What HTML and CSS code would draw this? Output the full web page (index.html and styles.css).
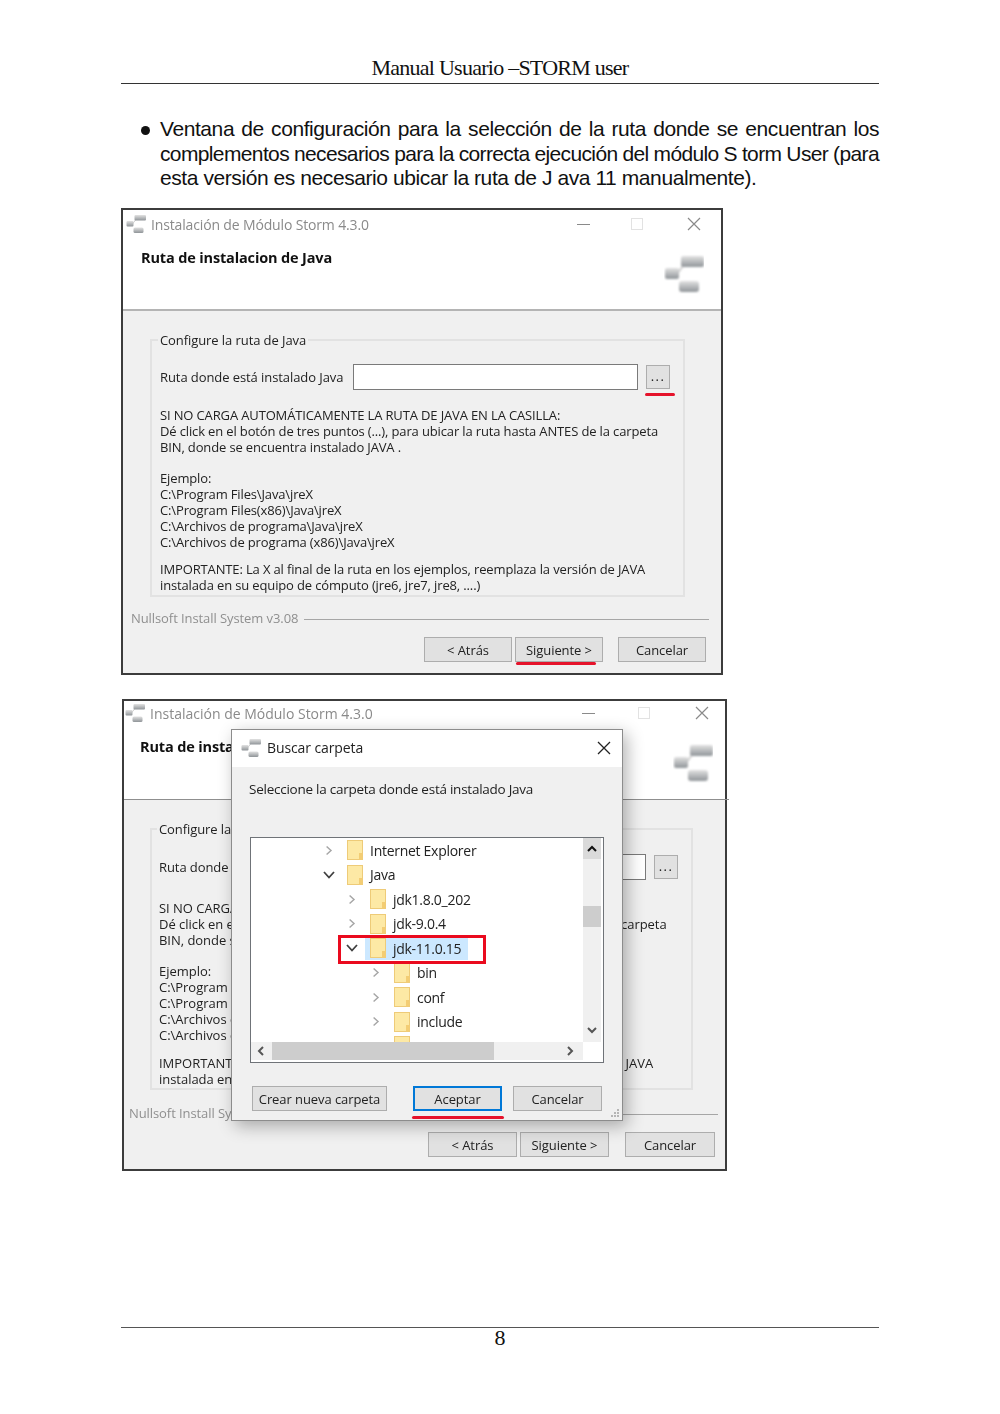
FILE: index.html
```html
<!DOCTYPE html>
<html lang="es">
<head>
  <meta charset="UTF-8" />
  <title>Manual Usuario - STORM user</title>
  <link rel="stylesheet" href="styles.css">
</head>
<body>
  <svg class="defs" width="0" height="0">
    <defs>
      <linearGradient id="blockGrad" x1="0" y1="0" x2="0" y2="1">
        <stop offset="0" stop-color="#e2e2e2" />
        <stop offset="1" stop-color="#8f9498" />
      </linearGradient>
      <filter id="soft"><feGaussianBlur stdDeviation="1" /></filter>
      <symbol id="logo" viewBox="0 0 40 40">
        <g filter="url(#soft)">
          <path d="M13 20 L19 12" stroke="#d0d0d0" stroke-width="2" fill="none" />
          <rect x="17" y="2" width="23" height="11" rx="2" fill="url(#blockGrad)" />
          <rect x="1" y="14" width="14" height="11" rx="2" fill="url(#blockGrad)" />
          <rect x="15" y="27" width="20" height="11" rx="3" fill="url(#blockGrad)" />
        </g>
      </symbol>
      <symbol id="folder" viewBox="0 0 16 20">
        <rect x="0.5" y="0.5" width="15" height="19" fill="#fde9a5" stroke="#eecb78" />
        <rect x="12" y="13" width="3.5" height="6.5" fill="#f3cd74" />
      </symbol>
      <symbol id="chevRight" viewBox="0 0 10 12"><path d="M2 1 L7.5 6 L2 11" fill="none" stroke="#a6a6a6" stroke-width="1.8" /></symbol>
      <symbol id="chevDown" viewBox="0 0 12 10"><path d="M1 2 L6 7.5 L11 2" fill="none" stroke="#404040" stroke-width="1.8" /></symbol>
    </defs>
  </svg>

  <div class="page">
    <header class="doc-header">Manual Usuario –STORM user</header>

    <div class="bullet">
      <span class="dot"></span>
      <p class="bullet-text">
        <span class="line">Ventana de configuración para la selección de la ruta donde se encuentran los</span>
        <span class="line tight">complementos necesarios para la correcta ejecución del módulo S torm User (para</span>
        <span class="line last">esta versión es necesario ubicar la ruta de J ava 11 manualmente).</span>
      </p>
    </div>

    <!-- first capture -->
    <div class="window win-a">
      <div class="head">
        <div class="titlebar">
          <svg class="title-logo"><use href="#logo" /></svg>
          <span class="title-text">Instalación de Módulo Storm 4.3.0</span>
          <span class="ctl-min"></span>
          <span class="ctl-max"></span>
          <svg class="ctl-close" viewBox="0 0 14 14"><path d="M1 1 L13 13 M13 1 L1 13" stroke="#8a8a8a" stroke-width="1.2" /></svg>
        </div>
        <div class="banner">
          <h2 class="banner-title">Ruta de instalacion de Java</h2>
          <svg class="banner-logo"><use href="#logo" /></svg>
        </div>
      </div>
      <div class="head-line"></div>
      <fieldset class="group">
        <legend>Configure la ruta de Java</legend>
        <div class="path-row">
          <span class="path-label">Ruta donde está instalado Java</span>
          <span class="path-input"></span>
          <span class="btn btn-dots">...</span>
        </div>
        <p class="note first">SI NO CARGA AUTOMÁTICAMENTE LA RUTA DE JAVA EN LA CASILLA:<br>Dé click en el botón de tres puntos (...), para ubicar la ruta hasta ANTES de la carpeta<br>BIN, donde se encuentra instalado JAVA .</p>
        <p class="note">Ejemplo:<br>C:\Program Files\Java\jreX<br>C:\Program Files(x86)\Java\jreX<br>C:\Archivos de programa\Java\jreX<br>C:\Archivos de programa (x86)\Java\jreX</p>
        <p class="note last-note">IMPORTANTE: La X al final de la ruta en los ejemplos, reemplaza la versión de JAVA<br>instalada en su equipo de cómputo (jre6, jre7, jre8, ....)</p>
      </fieldset>
      <div class="brand"><span>Nullsoft Install System v3.08</span><i></i></div>
      <div class="actions">
        <span class="btn">&lt; Atrás</span>
        <span class="btn">Siguiente &gt;</span>
        <span class="btn btn-cancel">Cancelar</span>
      </div>
      <span class="mark mark-dots"></span>
      <span class="mark mark-next"></span>
    </div>

    <!-- second capture, folder dialog open -->
    <div class="window win-b">
      <div class="head">
        <div class="titlebar">
          <svg class="title-logo"><use href="#logo" /></svg>
          <span class="title-text">Instalación de Módulo Storm 4.3.0</span>
          <span class="ctl-min"></span>
          <span class="ctl-max"></span>
          <svg class="ctl-close" viewBox="0 0 14 14"><path d="M1 1 L13 13 M13 1 L1 13" stroke="#8a8a8a" stroke-width="1.2" /></svg>
        </div>
        <div class="banner">
          <h2 class="banner-title">Ruta de instalacion de Java</h2>
          <svg class="banner-logo"><use href="#logo" /></svg>
        </div>
      </div>
      <div class="head-line"></div>
      <fieldset class="group">
        <legend>Configure la ruta de Java</legend>
        <div class="path-row">
          <span class="path-label">Ruta donde está instalado Java</span>
          <span class="path-input"></span>
          <span class="btn btn-dots">...</span>
        </div>
        <p class="note first">SI NO CARGA AUTOMÁTICAMENTE LA RUTA DE JAVA EN LA CASILLA:<br>Dé click en el botón de tres puntos (...), para ubicar la ruta hasta ANTES de la carpeta<br>BIN, donde se encuentra instalado JAVA .</p>
        <p class="note">Ejemplo:<br>C:\Program Files\Java\jreX<br>C:\Program Files(x86)\Java\jreX<br>C:\Archivos de programa\Java\jreX<br>C:\Archivos de programa (x86)\Java\jreX</p>
        <p class="note last-note">IMPORTANTE: La X al final de la ruta en los ejemplos, reemplaza la versión de JAVA<br>instalada en su equipo de cómputo (jre6, jre7, jre8, ....)</p>
      </fieldset>
      <div class="brand"><span>Nullsoft Install System v3.08</span><i></i></div>
      <div class="actions">
        <span class="btn">&lt; Atrás</span>
        <span class="btn">Siguiente &gt;</span>
        <span class="btn btn-cancel">Cancelar</span>
      </div>

      <div class="dialog">
        <div class="dialog-title">
          <svg class="title-logo"><use href="#logo" /></svg>
          <span>Buscar carpeta</span>
          <svg class="dialog-close" viewBox="0 0 14 14"><path d="M1 1 L13 13 M13 1 L1 13" stroke="#222" stroke-width="1.3" /></svg>
        </div>
        <div class="dialog-body">
          <p class="dialog-prompt">Seleccione la carpeta donde está instalado Java</p>
          <div class="tree">
            <div class="tree-rows">
              <div class="row lvl1"><svg class="chev"><use href="#chevRight" /></svg><svg class="folder"><use href="#folder" /></svg><span>Internet Explorer</span></div>
              <div class="row lvl1"><svg class="chev open"><use href="#chevDown" /></svg><svg class="folder"><use href="#folder" /></svg><span>Java</span></div>
              <div class="row lvl2"><svg class="chev"><use href="#chevRight" /></svg><svg class="folder"><use href="#folder" /></svg><span>jdk1.8.0_202</span></div>
              <div class="row lvl2"><svg class="chev"><use href="#chevRight" /></svg><svg class="folder"><use href="#folder" /></svg><span>jdk-9.0.4</span></div>
              <div class="row lvl2 selected"><svg class="chev open"><use href="#chevDown" /></svg><div class="sel-bg"><svg class="folder"><use href="#folder" /></svg><span>jdk-11.0.15</span></div></div>
              <div class="row lvl3"><svg class="chev"><use href="#chevRight" /></svg><svg class="folder"><use href="#folder" /></svg><span>bin</span></div>
              <div class="row lvl3"><svg class="chev"><use href="#chevRight" /></svg><svg class="folder"><use href="#folder" /></svg><span>conf</span></div>
              <div class="row lvl3"><svg class="chev"><use href="#chevRight" /></svg><svg class="folder"><use href="#folder" /></svg><span>include</span></div>
              <div class="row lvl3"><span class="chev"></span><svg class="folder"><use href="#folder" /></svg></div>
            </div>
            <div class="vscroll">
              <span class="scroll-up"><svg viewBox="0 0 10 8"><path d="M1 6 L5 2 L9 6" fill="none" stroke="#111" stroke-width="2" /></svg></span>
              <span class="scroll-thumb"></span>
              <svg class="scroll-down" viewBox="0 0 10 8"><path d="M1 2 L5 6 L9 2" fill="none" stroke="#555" stroke-width="2" /></svg>
            </div>
            <div class="hscroll">
              <svg class="scroll-left" viewBox="0 0 8 10"><path d="M6 1 L2 5 L6 9" fill="none" stroke="#555" stroke-width="2" /></svg>
              <span class="hscroll-thumb"></span>
              <svg class="scroll-right" viewBox="0 0 8 10"><path d="M2 1 L6 5 L2 9" fill="none" stroke="#555" stroke-width="2" /></svg>
            </div>
            <span class="mark-box"></span>
          </div>
          <div class="dialog-actions">
            <span class="btn btn-new">Crear nueva carpeta</span>
            <span class="btn btn-ok">Aceptar</span>
            <span class="btn">Cancelar</span>
          </div>
        </div>
        <span class="mark mark-ok"></span>
        <svg class="grip" viewBox="0 0 10 10"><path d="M8 1h2v2H8zM5 4h2v2H5zM8 4h2v2H8zM2 7h2v2H2zM5 7h2v2H5zM8 7h2v2H8z" fill="#b5b5b5" /></svg>
      </div>
    </div>

    <footer class="doc-footer">8</footer>
  </div>
</body>
</html>
```

FILE: styles.css
```css
* {
  box-sizing: border-box;
}
body {
  margin: 0;
  background: #fff;
  color: #111;
  font-family: "Liberation Sans", sans-serif;
}
.defs {
  position: absolute;
}
.page {
  height: 1414px;
  padding: 0 121px;
  display: flex;
  flex-direction: column;
}

/* document text */
.doc-header {
  margin-top: 55px;
  height: 29px;
  border-bottom: 1px solid #333;
  text-align: center;
  font-family: "Liberation Serif", serif;
  font-size: 22px;
  line-height: 26px;
  letter-spacing: -0.75px;
}
.bullet {
  margin-top: 33px;
  display: flex;
  padding-left: 20px;
}
.dot {
  flex: none;
  width: 9px;
  height: 9px;
  margin-top: 9px;
  margin-right: 10px;
  border-radius: 50%;
  background: #111;
}
.bullet-text {
  flex: 1;
  margin: 0;
  font-size: 21px;
  line-height: 24.5px;
  letter-spacing: -0.42px;
}
.line {
  display: block;
  text-align: justify;
  text-align-last: justify;
}
.line.tight {
  letter-spacing: -0.63px;
  word-spacing: -1.7px;
}
.line.last {
  text-align-last: left;
}
.doc-footer {
  margin-top: auto;
  margin-bottom: 63px;
  height: 24px;
  border-top: 1px solid #555;
  text-align: center;
  font-family: "Liberation Serif", serif;
  font-size: 22px;
  line-height: 20px;
}

/* installer window */
.window {
  position: relative;
  display: flex;
  flex-direction: column;
  background: #f0f0f0;
  border: 2px solid #3c3c3c;
  font-family: "Open Sans", sans-serif;
  font-size: 13px;
  letter-spacing: -0.08px;
  color: #222;
  filter: blur(0.3px);
}
.win-a {
  width: 602px;
  height: 467px;
  margin-top: 17.5px;
}
.win-b {
  width: 605px;
  height: 472px;
  margin-top: 24px;
  margin-left: 1px;
}
.head {
  height: 99px;
  background: #fff;
}
.head-line {
  position: relative;
  height: 1px;
  background: #a0a0a0;
}
.win-a .head-line {
  height: 2px;
  background: #b4b4b4;
}
.win-b .head-line {
  margin-right: -4px;
  background: #8f8f8f;
}
.win-b .head {
  height: 98px;
}
.titlebar {
  height: 28px;
  display: flex;
  align-items: center;
  padding-left: 3px;
  color: #8a8a8a;
}
.title-logo {
  width: 20px;
  height: 20px;
  flex: none;
}
.title-text {
  margin-left: 5px;
  font-size: 14px;
  letter-spacing: -0.15px;
}
.ctl-min {
  margin-left: auto;
  width: 13px;
  height: 1px;
  background: #8a8a8a;
  margin-right: 41px;
}
.ctl-max {
  width: 12px;
  height: 12px;
  border: 1px solid #e2e2e2;
  margin-right: 44px;
}
.ctl-close {
  width: 14px;
  height: 14px;
  margin-right: 20px;
}
.win-b .titlebar {
  height: 24px;
  padding-left: 1px;
}
.win-b .title-text {
  letter-spacing: 0;
}
.win-b .ctl-min {
  margin-right: 43px;
}
.win-b .ctl-max {
  margin-right: 45px;
}
.win-b .ctl-close {
  margin-right: 16px;
}
.banner {
  display: flex;
  justify-content: space-between;
  padding: 11px 17px 0 18px;
}
.banner-title {
  margin: 0;
  font-size: 14.5px;
  line-height: 18px;
  font-weight: 700;
  letter-spacing: -0.15px;
  color: #111;
}
.banner-logo {
  width: 40px;
  height: 40px;
  margin-top: 5px;
}
.win-b .banner {
  padding-top: 13px;
  padding-right: 12px;
  padding-left: 16px;
}

.group {
  margin: 21px 36px 0 27px;
  padding: 0 8px;
  height: 265px;
  border: 2px solid #e2e2e2;
  min-width: 0;
}
.group legend {
  padding: 0 2px;
  margin-left: -2px;
  line-height: 16px;
}
.win-b .group {
  margin: 21px 32px 0 26px;
  padding: 0 7px 0 7px;
  height: 269px;
}
.path-row {
  display: flex;
  align-items: center;
  height: 26px;
  margin-top: 16px;
}
.path-label {
  width: 193px;
  flex: none;
}
.path-input {
  width: 285px;
  height: 26px;
  background: #fff;
  border: 1px solid #7a7a7a;
}
.win-b .path-input {
  width: 294px;
}
.note {
  margin: 15px 0 0;
  line-height: 16px;
  white-space: nowrap;
  letter-spacing: -0.14px;
}
.note.first {
  margin-top: 17px;
}
.note.last-note {
  margin-top: 11px;
}
.win-b .note {
  letter-spacing: -0.03px;
}
.win-b .note.first {
  margin-top: 20px;
}
.win-b .note.last-note {
  margin-top: 12px;
}
.win-b .path-row {
  margin-top: 17px;
}
.brand {
  display: flex;
  align-items: center;
  margin: 12px 12px 0 8px;
  color: #8f8f8f;
  white-space: nowrap;
  font-size: 13px;
}
.brand i {
  flex: 1;
  height: 1px;
  margin: 2px 0 0 6px;
  background: #a6a6a6;
}
.win-b .brand {
  margin: 14px 7px 0 5px;
}
.actions {
  display: flex;
  justify-content: flex-end;
  gap: 3px;
  margin: 10px 15px 0 0;
}
.win-b .actions {
  margin: 10px 10px 0 0;
}
.btn {
  display: flex;
  align-items: center;
  justify-content: center;
  width: 88px;
  height: 25px;
  background: #e1e1e1;
  border: 1px solid #adadad;
  color: #222;
}
.btn.btn-dots {
  width: 24px;
  height: 24px;
  margin-left: 8px;
  padding-bottom: 2px;
  letter-spacing: 1.5px;
}
.btn-cancel {
  margin-left: 12px;
}
.win-b .actions .btn {
  width: 89px;
}
.win-b .actions .btn-cancel {
  width: 90px;
  margin-left: 13px;
}

/* red hand drawn marks */
.mark {
  position: absolute;
  height: 3px;
  background: #e5132b;
  border-radius: 2px;
}
.mark-dots {
  left: 522px;
  top: 183px;
  width: 30px;
}
.mark-next {
  left: 393px;
  top: 452px;
  width: 80px;
}

/* folder dialog */
.dialog {
  position: absolute;
  left: 107px;
  top: 28px;
  width: 392px;
  height: 392px;
  background: #f0f0f0;
  border: 1px solid #8c8c8c;
  box-shadow: 4px 5px 16px rgba(0, 0, 0, 0.3);
  display: flex;
  flex-direction: column;
}
.dialog-title {
  height: 37px;
  flex: none;
  display: flex;
  align-items: center;
  gap: 6px;
  padding: 0 0 2px 9px;
  background: #fff;
  font-size: 14px;
  letter-spacing: -0.1px;
}
.dialog-close {
  width: 14px;
  height: 14px;
  margin-left: auto;
  margin-right: 11px;
}
.dialog-body {
  padding: 0 19px 0 17px;
}
.dialog-prompt {
  margin: 13px 0 0;
  line-height: 18px;
  font-size: 13.5px;
  letter-spacing: -0.25px;
}
.tree {
  position: relative;
  margin-top: 39px;
  margin-left: 1px;
  width: 354px;
  height: 226px;
  background: #fff;
  border: 1px solid #6f7378;
  display: grid;
  grid-template-columns: 332px 18px;
  grid-template-rows: 204px 18px;
  font-size: 14px;
  letter-spacing: -0.28px;
}
.tree-rows {
  overflow: hidden;
}
.row {
  height: 24.5px;
  display: flex;
  align-items: center;
  white-space: nowrap;
}
.row.lvl1 {
  padding-left: 74px;
}
.row.lvl2 {
  padding-left: 97px;
}
.row.lvl3 {
  padding-left: 121px;
}
.chev {
  width: 8px;
  height: 11px;
  flex: none;
  margin-right: 14px;
}
.chev.open {
  width: 12px;
  height: 10px;
  margin-left: -2px;
  margin-right: 12px;
}
.folder {
  width: 16px;
  height: 20px;
  flex: none;
  margin-right: 7px;
}
.sel-bg {
  display: flex;
  align-items: center;
  height: 23px;
  width: 103px;
  margin-left: -5px;
  padding-left: 5px;
  background: #cce8ff;
}
.vscroll {
  position: relative;
  background: #f0f0f0;
}
.scroll-up {
  display: flex;
  align-items: center;
  justify-content: center;
  height: 21px;
  background: #dadada;
}
.scroll-up svg,
.scroll-down {
  width: 10px;
  height: 8px;
}
.scroll-thumb {
  position: absolute;
  top: 68px;
  left: 0;
  width: 100%;
  height: 21px;
  background: #cdcdcd;
}
.scroll-down {
  position: absolute;
  left: 4px;
  bottom: 8px;
}
.hscroll {
  grid-column: 1 / 2;
  display: flex;
  align-items: center;
  background: #f0f0f0;
}
.scroll-left,
.scroll-right {
  width: 8px;
  height: 10px;
  flex: none;
}
.scroll-left {
  margin: 0 7px 0 6px;
}
.hscroll-thumb {
  width: 222px;
  height: 100%;
  background: #cdcdcd;
}
.scroll-right {
  margin-left: 72px;
}
.mark-box {
  position: absolute;
  left: 87px;
  top: 97px;
  width: 148px;
  height: 29px;
  border: 3px solid #ea0a1e;
}
.dialog-actions {
  display: flex;
  margin-top: 23px;
  margin-left: 3px;
}
.dialog-actions .btn {
  height: 25px;
  width: 89px;
}
.dialog-actions .btn-new {
  width: 135px;
  margin-right: 26px;
}
.dialog-actions .btn-ok {
  border: 2px solid #0078d7;
  margin-right: 11px;
}
.mark-ok {
  left: 180px;
  top: 386px;
  width: 92px;
}
.grip {
  position: absolute;
  right: 3px;
  bottom: 2px;
  width: 10px;
  height: 10px;
}
```
